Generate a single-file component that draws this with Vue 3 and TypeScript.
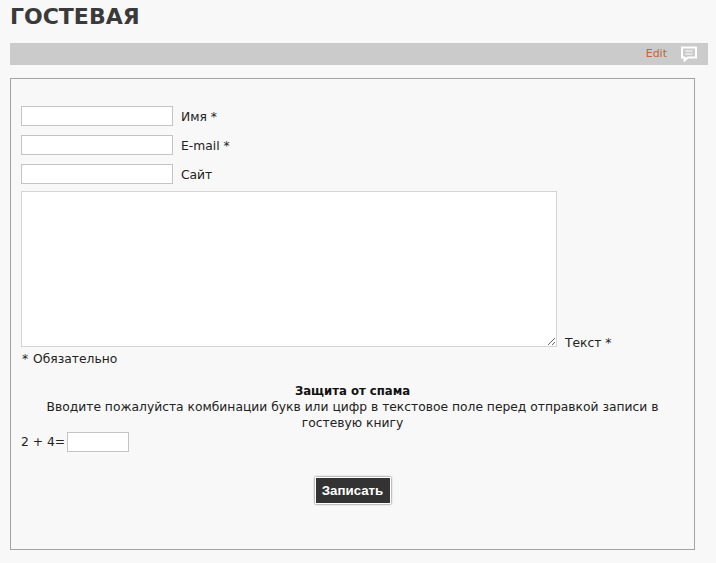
<script setup lang="ts">
const fields: { label: string }[] = [
  { label: 'Имя *' },
  { label: 'E-mail *' },
  { label: 'Сайт' },
]
</script>

<template>
  <div class="page">
    <h1 class="title">ГОСТЕВАЯ</h1>
    <div class="bar">
      <a class="edit">Edit</a>
      <svg class="icon" width="16" height="16" viewBox="0 0 16 16">
        <path d="M1 1.5H15V11.5H7L3.5 14.5V11.5H1Z" fill="none" stroke="#fff" stroke-width="2" />
        <path d="M4.5 5H11.5M4.5 8H11.5" stroke="#fff" stroke-width="1" />
      </svg>
    </div>
    <form class="box" @submit.prevent>
      <div v-for="f in fields" :key="f.label" class="row">
        <input class="field" type="text" />
        <label class="label">{{ f.label }}</label>
      </div>
      <div class="area-row">
        <textarea class="area"></textarea>
        <label class="label area-label">Текст *</label>
      </div>
      <div class="note">* Обязательно</div>
      <div class="spam">
        <strong>Защита от спама</strong>
        <div>Вводите пожалуйста комбинации букв или цифр в текстовое поле перед отправкой записи в гостевую книгу</div>
      </div>
      <div class="captcha">
        <span>2 + 4=</span>
        <input class="field small" type="text" />
      </div>
      <div class="actions">
        <button class="submit" type="submit">Записать</button>
      </div>
    </form>
  </div>
</template>

<style>
html, body { background: #f8f8f8; }
</style>

<style scoped>
.page {
  width: 716px;
  height: 563px;
  overflow: hidden;
  box-sizing: border-box;
  padding: 0 8px 0 10px;
  font-family: "DejaVu Sans", Verdana, sans-serif;
  font-size: 12.3px;
  line-height: 16px;
  color: #222;
}
.title {
  margin: 0;
  height: 43px;
  padding-top: 4px;
  box-sizing: border-box;
  font-size: 22px;
  line-height: 26px;
  font-weight: 700;
  color: #3a3a3a;
}
.bar {
  height: 22px;
  background: #cbcbcb;
  display: flex;
  align-items: center;
  justify-content: flex-end;
  padding-right: 11px;
  gap: 14px;
}
.edit {
  font-size: 11px;
  color: #c8623a;
}
.icon { display: block; }
.box {
  margin-top: 13px;
  width: 685px;
  height: 472px;
  box-sizing: border-box;
  border: 1px solid #a3a3a3;
  padding: 27px 10px 0;
}
.row {
  display: flex;
  align-items: center;
  gap: 8px;
  height: 20px;
  margin-bottom: 9px;
}
.label { white-space: nowrap; position: relative; top: 1px; }
.field {
  width: 152px;
  height: 20px;
  box-sizing: border-box;
  border: 1px solid #c4c4c4;
  background: #fff;
  margin: 0;
  padding: 1px 2px;
  outline: none;
}
.small { width: 62px; }
.area-row {
  display: flex;
  align-items: flex-end;
  gap: 8px;
  margin-top: -2px;
}
.area {
  display: block;
  width: 536px;
  height: 156px;
  box-sizing: border-box;
  border: 1px solid #d4d4d4;
  background: #fff;
  margin: 0;
  padding: 2px;
  outline: none;
}
.area-label { top: 4px; }
.note { margin-top: 4px; height: 16px; padding-left: 1px; word-spacing: 1px; }
.spam {
  margin-top: 16px;
  text-align: center;
  color: #222;
  padding: 0 4px;
}
.spam strong { color: #111; font-size: 11.7px; }
.captcha {
  display: flex;
  align-items: center;
  gap: 2px;
  margin-top: 1px;
}
.actions {
  display: flex;
  justify-content: center;
  margin-top: 25px;
}
.submit {
  width: 76px;
  height: 27px;
  box-sizing: border-box;
  border: 1px solid #fff;
  box-shadow: 0 0 2px rgba(0, 0, 0, 0.7);
  background: #333;
  color: #fff;
  font-family: "Liberation Sans", Arial, sans-serif;
  font-size: 13.3px;
  font-weight: 700;
  padding: 0;
}
</style>
